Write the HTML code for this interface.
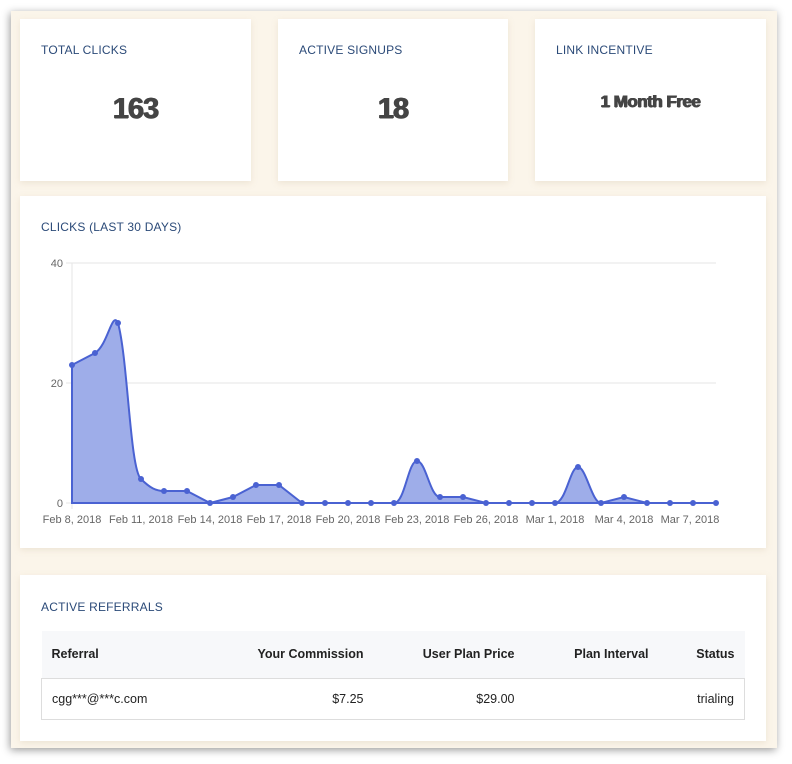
<!DOCTYPE html>
<html><head><style>
*{box-sizing:border-box;margin:0;padding:0}
body{width:792px;height:764px;background:#fff;font-family:"Liberation Sans",sans-serif;position:relative;overflow:hidden}
.frame{position:absolute;left:11px;top:11px;width:766px;height:737px;background:#fbf5ea;box-shadow:-1px 2px 8px rgba(0,0,0,.4)}
.card{position:absolute;background:#fff;box-shadow:0 2px 6px rgba(200,180,150,.25)}
.t{position:absolute;left:21px;font-size:12px;color:#2b4a78;letter-spacing:.2px}
.big{position:absolute;left:0;right:0;text-align:center;font-weight:bold;color:#444;font-family:"Liberation Sans",sans-serif;letter-spacing:-1px;text-shadow:0.6px 0 0 #444,-0.6px 0 0 #444,0 0.6px 0 #444}
table{border-collapse:collapse;table-layout:fixed;width:703px;position:absolute;left:21px;top:56px;font-size:12.5px;color:#222}
th{background:#f7f8fa;height:47px;font-weight:bold;padding:0 10px}
td{height:41px;padding:0 10px;border-top:1px solid #ddd;border-bottom:1px solid #ddd}
td:first-child{border-left:1px solid #ddd}td:last-child{border-right:1px solid #ddd}
.r{text-align:right}.l{text-align:left}
</style></head><body>
<div class="frame"></div>
<div class="card" style="left:20px;top:19px;width:231px;height:162px"><div class="t" style="top:24px">TOTAL CLICKS</div><div class="big" style="top:74px;font-size:29px">163</div></div>
<div class="card" style="left:278px;top:19px;width:230px;height:162px"><div class="t" style="top:24px">ACTIVE SIGNUPS</div><div class="big" style="top:74px;font-size:29px">18</div></div>
<div class="card" style="left:535px;top:19px;width:231px;height:162px"><div class="t" style="top:24px">LINK INCENTIVE</div><div class="big" style="top:73px;font-size:17px;letter-spacing:-0.5px">1 Month Free</div></div>
<div class="card" style="left:20px;top:196px;width:746px;height:352px"><div class="t" style="top:24px">CLICKS (LAST 30 DAYS)</div></div>
<svg style="position:absolute;left:0;top:0" width="792" height="764" font-family="Liberation Sans,sans-serif" font-size="11" fill="#666">
<g stroke="#e6e6e6"><line x1="66" y1="263" x2="716" y2="263"/><line x1="66" y1="383" x2="716" y2="383"/><line x1="66" y1="503" x2="716" y2="503"/><line x1="72" y1="263" x2="72" y2="509"/></g>
<text x="63" y="267" text-anchor="end">40</text><text x="63" y="387" text-anchor="end">20</text><text x="63" y="507" text-anchor="end">0</text>
<g text-anchor="middle"><text x="72" y="523">Feb 8, 2018</text><text x="141" y="523">Feb 11, 2018</text><text x="210" y="523">Feb 14, 2018</text><text x="279" y="523">Feb 17, 2018</text><text x="348" y="523">Feb 20, 2018</text><text x="417" y="523">Feb 23, 2018</text><text x="486" y="523">Feb 26, 2018</text><text x="555" y="523">Mar 1, 2018</text><text x="624" y="523">Mar 4, 2018</text><text x="690" y="523">Mar 7, 2018</text></g>
<path d="M72,365 L95,353 C108,345 112,310 118,323 C128,360 130,470 141,479 C150,488 156,491 164,491 L187,491 L210,503 L233,497 L256,485 L279,485 L302,503 L394,503 C405,503 408,461 417,461 C426,461 430,497 440,497 L463,497 L486,503 L555,503 C566,503 570,467 578,467 C586,467 592,503 601,503 L624,497 L647,503 L716,503 L716,503 L72,503 Z" fill="#9eade9" stroke="#4a62d2" stroke-width="2"/>
<g fill="#4a62d2"><circle cx="72" cy="365" r="3"/><circle cx="95" cy="353" r="3"/><circle cx="118" cy="323" r="3"/><circle cx="141" cy="479" r="3"/><circle cx="164" cy="491" r="3"/><circle cx="187" cy="491" r="3"/><circle cx="210" cy="503" r="3"/><circle cx="233" cy="497" r="3"/><circle cx="256" cy="485" r="3"/><circle cx="279" cy="485" r="3"/><circle cx="302" cy="503" r="3"/><circle cx="325" cy="503" r="3"/><circle cx="348" cy="503" r="3"/><circle cx="371" cy="503" r="3"/><circle cx="394" cy="503" r="3"/><circle cx="417" cy="461" r="3"/><circle cx="440" cy="497" r="3"/><circle cx="463" cy="497" r="3"/><circle cx="486" cy="503" r="3"/><circle cx="509" cy="503" r="3"/><circle cx="532" cy="503" r="3"/><circle cx="555" cy="503" r="3"/><circle cx="578" cy="467" r="3"/><circle cx="601" cy="503" r="3"/><circle cx="624" cy="497" r="3"/><circle cx="647" cy="503" r="3"/><circle cx="670" cy="503" r="3"/><circle cx="693" cy="503" r="3"/><circle cx="716" cy="503" r="3"/></g>
</svg>
<div class="card" style="left:20px;top:575px;width:746px;height:166px"><div class="t" style="top:25px">ACTIVE REFERRALS</div>
<table><colgroup><col style="width:180px"><col style="width:152px"><col style="width:151px"><col style="width:134px"><col style="width:86px"></colgroup>
<tr><th class="l">Referral</th><th class="r">Your Commission</th><th class="r">User Plan Price</th><th class="r">Plan Interval</th><th class="r">Status</th></tr>
<tr><td class="l">cgg***@***c.com</td><td class="r">$7.25</td><td class="r">$29.00</td><td></td><td class="r">trialing</td></tr></table></div>
</body></html>
